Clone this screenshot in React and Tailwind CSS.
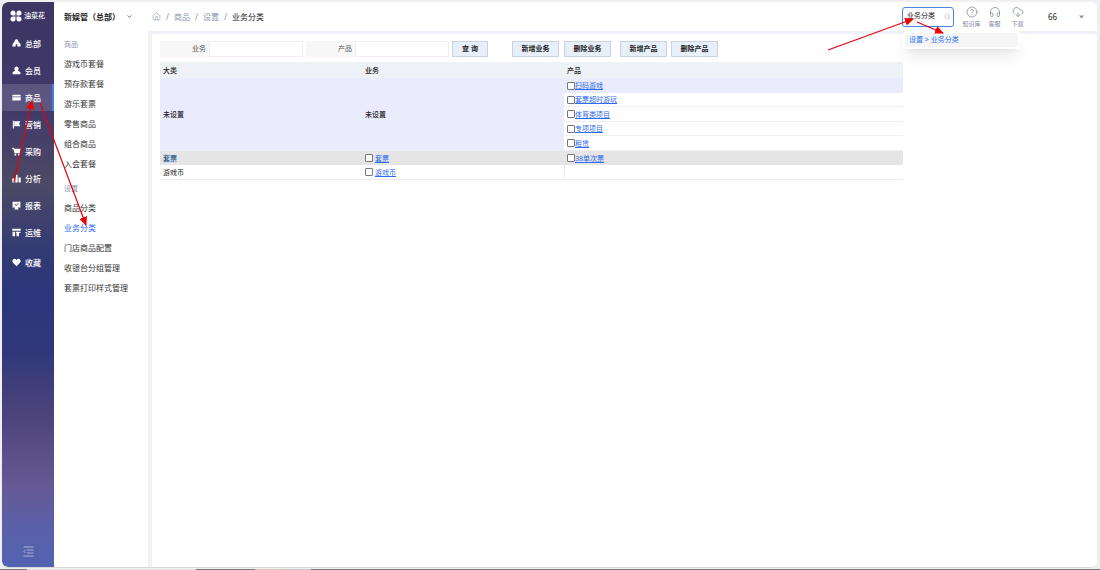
import React, { useState } from 'react';
import { ChevronDown, CircleHelp, CloudDownload, Headphones, House, Search } from 'lucide-react';

// Filled glyphs of the main menu, all on a 16x16 grid
const icons = {
  hq: 'M8 0.500 C11 0.500 11.500 4 12 6 H13 Q15.500 8 15.500 13.500 H9.500 V9.500 H6.500 V13.500 H0.500 Q0.500 8 3 6 H4 C4.500 4 5 0.500 8 0.500 Z',
  member: 'M8 1 a4 4 0 0 1 2.5 7 L15 11 V14.5 H1 V11 L5.500 8 A4 4 0 0 1 8 1 Z',
  goods: 'M2 3 H14 Q15.500 3 15.500 4.500 V6 H0.500 V4.500 Q0.500 3 2 3 Z M0.500 7.500 H15.500 V12 Q15.500 13.500 14 13.500 H2 Q0.500 13.500 0.500 12 Z',
  flag: 'M1.500 1.500 H3.500 V15 H1.500 Z M4 2 H15 L12.500 6.500 L15 11 H4 Z',
  cart: 'M0.500 1.500 H3.500 L4.200 3 H15.500 L14 11 H4.500 L2.500 4 H0.500 Z M4.500 12 H7.500 V15 H4.500 Z M11 12 H14 V15 H11 Z',
  chart: 'M0.500 8 H4.500 V15 H0.500 Z M6 1.500 H10 V15 H6 Z M11.500 6 H15.500 V15 H11.500 Z',
  report: 'M1 1.500 H15 V11.500 H10 L12 15 H4 L6 11.500 H1 Z M4.500 6 L7.500 9 L12 4.500 L11 3.500 L7.500 7 L5.500 5 Z',
  ops: 'M0.500 1.500 H15.500 V5 H0.500 Z M1 6.500 H5.500 V14.500 H1 Z M7 6.500 H15 V9 H12.500 V14.500 H8 V9 H7 Z',
  heart: 'M8 14.500 L1.800 8.500 C-1 5 2 1 5 1.500 C6.500 1.700 7.500 2.500 8 3.500 C8.500 2.500 9.500 1.700 11 1.500 C14 1 17 5 14.200 8.500 Z',
};

const mainMenu = [
  { icon: 'hq', label: '总部' },
  { icon: 'member', label: '会员' },
  { icon: 'goods', label: '商品', active: true },
  { icon: 'flag', label: '营销' },
  { icon: 'cart', label: '采购' },
  { icon: 'chart', label: '分析' },
  { icon: 'report', label: '报表' },
  { icon: 'ops', label: '运维' },
];

const subMenu = [
  { title: '商品', items: ['游戏币套餐', '预存款套餐', '游乐套票', '零售商品', '组合商品', '入会套餐'] },
  { title: '设置', items: ['商品分类', '业务分类', '门店商品配置', '收银台分组管理', '套票打印样式管理'] },
];

const products = ['扫码游戏', '套票超时游玩', '体育类项目', '专项项目', '租赁'];

const Glyph = ({ name }) => (
  <svg className="h-[9px] w-[9px] shrink-0" viewBox="0 0 16 16" fill="currentColor" fillRule="evenodd">
    <path d={icons[name]} />
  </svg>
);

const MenuItem = ({ icon, label, active }) => (
  <a
    href="#"
    className={`flex h-[27px] items-center gap-1 pl-[10px] text-[8px] font-medium ${
      active ? 'border-r-2 border-[#3f7cf0] bg-white/15' : ''
    }`}
  >
    <Glyph name={icon} />
    {label}
  </a>
);

const Sidebar = () => (
  <nav className="flex w-[52px] shrink-0 flex-col rounded-l-md bg-[linear-gradient(180deg,#3d3663_0%,#40396a_18%,#4d4965_32%,#333a74_44%,#2b377b_52%,#30387a_62%,#4d437b_73%,#665a96_86%,#5a60a8_93%,#5263b2_100%)] text-white">
    <div className="flex h-7 items-center gap-[2px] pl-2 text-[7px] font-medium">
      <svg className="h-3 w-3 shrink-0" viewBox="0 0 24 24" fill="currentColor">
        <path d="M6 1 a5 5 0 0 1 5 5 V11 H6 A5 5 0 0 1 6 1 Z M18 1 a5 5 0 0 1 0 10 H13 V6 A5 5 0 0 1 18 1 Z M6 13 H11 V18 A5 5 0 1 1 6 13 Z M13 13 H18 A5 5 0 1 1 13 18 Z" />
      </svg>
      油菜花
    </div>
    {mainMenu.map((item) => (
      <MenuItem key={item.label} {...item} />
    ))}
    <div className="mt-[3px]">
      <MenuItem icon="heart" label="收藏" />
    </div>
    <button aria-label="收起菜单" className="mx-auto mt-auto mb-[10px] text-white/50">
      <svg className="h-[11px] w-[11px]" viewBox="0 0 22 22" fill="none" stroke="currentColor" strokeWidth="2">
        <path d="M1 2 H21 M8 8 H21 M8 14 H21 M1 20 H21 M5 8 L2 11 L5 14" />
      </svg>
    </button>
  </nav>
);

const SubMenu = () => (
  <nav className="w-[94px] shrink-0 bg-white pl-[10px] pt-[5px] text-[8px] text-[#333]">
    {subMenu.map((group) => (
      <div key={group.title} className="mb-[6px]">
        <div className="h-[18px] text-[7px] leading-[18px] text-[#8b95ad]">{group.title}</div>
        {group.items.map((item) => (
          <a
            key={item}
            href="#"
            className={`block h-5 leading-5 whitespace-nowrap ${item === '业务分类' ? 'text-[#2f6bf0]' : ''}`}
          >
            {item}
          </a>
        ))}
      </div>
    ))}
  </nav>
);

const Tool = ({ icon: Icon, label }) => (
  <button className="flex w-[23px] flex-col items-center gap-[2px] text-[6px] leading-[8px] whitespace-nowrap text-[#7d8599]">
    <Icon size={12} strokeWidth={1.5} />
    {label}
  </button>
);

const Header = () => {
  const [keyword, setKeyword] = useState('业务分类');

  return (
    <header className="flex h-[29px] shrink-0 items-center rounded-tr-md bg-white text-[8px]">
      <button className="flex w-[94px] items-center gap-[6px] pl-[10px] font-bold whitespace-nowrap text-[#222]">
        新娱管（总部）
        <ChevronDown size={7} />
      </button>
      <div className="flex items-center gap-[5px] pl-1 text-[#8b95ad]">
        <House size={9} strokeWidth={1.5} />
        <span>/</span>
        <a href="#">商品</a>
        <span>/</span>
        <a href="#">设置</a>
        <span>/</span>
        <span className="text-[#222]">业务分类</span>
      </div>
      <div className="relative ml-auto">
        <label className="flex h-5 w-[52px] items-center rounded-[3px] border border-[#4a86d8] pr-[2px] pl-1">
          <input
            aria-label="搜索菜单"
            value={keyword}
            onChange={(e) => setKeyword(e.target.value)}
            className="w-full min-w-0 text-[7px] text-[#222] outline-none"
          />
          <Search size={7} strokeWidth={1.5} className="shrink-0 text-[#a0a6b4]" />
        </label>
        <div className="absolute top-6 left-px z-10 w-[117px] rounded-[3px] bg-white p-[2px] shadow-lg">
          <a href="#" className="block h-[14px] rounded-[2px] bg-[#f5f5f5] pl-1 text-[7px] leading-[14px] text-[#1f74f5]">
            设置 &gt; 业务分类
          </a>
        </div>
      </div>
      <div className="ml-[6px] flex items-center">
        <Tool icon={CircleHelp} label="知识库" />
        <Tool icon={Headphones} label="客服" />
        <Tool icon={CloudDownload} label="下载" />
      </div>
      <button className="ml-[19px] flex w-[49px] items-center justify-between pr-[13px] text-[#222]">
        66
        <svg className="h-1 w-[5px]" viewBox="0 0 10 8" fill="#8b909c">
          <path d="M0 1 H10 L5 7 Z" />
        </svg>
      </button>
    </header>
  );
};

const Field = ({ label, id }) => (
  <div className="flex h-4 w-[143px] text-[7px]">
    <label htmlFor={id} className="w-[49px] bg-[#f7f7f8] pr-[3px] text-right leading-4 text-[#555]">
      {label}
    </label>
    <input id={id} className="min-w-0 flex-1 border border-[#efefef] bg-white px-1 outline-none" />
  </div>
);

const ActionButton = ({ children, wide }) => (
  <button
    className={`h-4 border border-[#c9d2e2] bg-[#e7effb] text-[7px] font-bold text-[#222] ${wide ? 'w-[47px]' : 'w-[36px]'}`}
  >
    {children}
  </button>
);

const CheckLink = ({ label, spaced }) => (
  <div className={`flex items-center ${spaced ? 'gap-[2px]' : ''}`}>
    <input
      type="checkbox"
      aria-label={label}
      className="h-2 w-2 shrink-0 appearance-none rounded-[1px] border border-[#777] bg-white checked:bg-[#2f6bf0]"
    />
    <a href="#" className="text-[#2f6bf0] underline">
      {label}
    </a>
  </div>
);

const CategoryTable = () => (
  <table className="mt-[5px] w-[743px] max-w-full table-fixed border-separate border-spacing-0 text-left text-[7px] leading-[13px] text-[#222] [&_td]:px-[3px] [&_td]:py-0 [&_th]:px-[3px] [&_th]:py-0">
    <colgroup>
      <col className="w-[202px]" />
      <col className="w-[202px]" />
      <col />
    </colgroup>
    <thead>
      <tr className="h-4 bg-[#eef1f5]">
        <th className="font-medium">大类</th>
        <th className="font-medium">业务</th>
        <th className="font-medium">产品</th>
      </tr>
    </thead>
    <tbody className="[&>tr:nth-child(even)]:h-[14px] [&>tr:nth-child(odd)]:h-[15px]">
      {products.map((name, i) => (
        <tr key={name}>
          {i === 0 && (
            <>
              <td rowSpan={products.length} className="bg-[#eaebfd] font-medium">未设置</td>
              <td rowSpan={products.length} className="bg-[#eaebfd] font-medium">未设置</td>
            </>
          )}
          <td className={i === 0 ? 'bg-[#eaebfd]' : 'border-b border-[#f0f0f0]'}>
            <CheckLink label={name} />
          </td>
        </tr>
      ))}
      <tr className="bg-[#e5e5e5]">
        <td>
          <span className="bg-[#cfe0ee] text-[#17466f]">套票</span>
        </td>
        <td>
          <CheckLink label="套票" spaced />
        </td>
        <td>
          <CheckLink label="38单次票" />
        </td>
      </tr>
      <tr>
        <td className="border-b border-[#ececec]">游戏币</td>
        <td className="border-b border-[#ececec]">
          <CheckLink label="游戏币" spaced />
        </td>
        <td className="border-b border-l border-[#ececec]"></td>
      </tr>
    </tbody>
  </table>
);

// Red guide arrows drawn over the page
const arrows = [
  [14, 182, 32, 101],
  [40, 103, 86, 225],
  [828, 50, 913, 19],
  [917, 22, 943, 33],
];

const GuideArrows = () => (
  <svg className="pointer-events-none absolute inset-0 z-20 h-full w-full" stroke="#e8000c" strokeWidth="1.2">
    <defs>
      <marker id="head" markerUnits="userSpaceOnUse" markerWidth="10" markerHeight="8" refX="8" refY="4" orient="auto">
        <path d="M0 0 L9 4 L0 8 Z" fill="#f00000" stroke="none" />
      </marker>
    </defs>
    {arrows.map(([x1, y1, x2, y2]) => (
      <line key={x1} x1={x1} y1={y1} x2={x2} y2={y2} markerEnd="url(#head)" />
    ))}
  </svg>
);

const App = () => {
  return (
    <div
      lang="zh-CN"
      className="relative flex min-h-screen flex-col bg-[#f0f0f2] font-['Noto_Sans','Noto_Sans_CJK_SC',sans-serif]"
    >
      <div className="mt-[2px] mr-[3px] mb-px ml-[2px] flex flex-1 overflow-hidden rounded-md border-b border-[#d8d8da] bg-white">
        <Sidebar />
        <div className="flex min-w-0 flex-1 flex-col">
          <Header />
          <div className="flex flex-1">
            <SubMenu />
            <main className="min-w-0 flex-1 border-t-[3px] border-l-4 border-[#eef1f8] bg-white pt-[7px] pl-2">
              <form className="flex" onSubmit={(e) => e.preventDefault()}>
                <div className="flex gap-[3px]">
                  <Field label="业务" id="business" />
                  <Field label="产品" id="product" />
                  <ActionButton>查 询</ActionButton>
                </div>
                <div className="ml-6 flex gap-[5px]">
                  <ActionButton wide>新增业务</ActionButton>
                  <ActionButton wide>删除业务</ActionButton>
                </div>
                <div className="ml-[9px] flex gap-1">
                  <ActionButton wide>新增产品</ActionButton>
                  <ActionButton wide>删除产品</ActionButton>
                </div>
              </form>
              <CategoryTable />
            </main>
          </div>
        </div>
      </div>
      <footer className="flex h-px bg-[#777]">
        <span className="w-[27px]"></span>
        <span className="w-[169px] bg-[#e2e2e2]"></span>
        <span className="w-[59px]"></span>
        <span className="w-7 bg-[#e0c4b0]"></span>
        <span className="w-7 bg-[#c4c4c6]"></span>
      </footer>
      <GuideArrows />
    </div>
  );
};

export default App;
